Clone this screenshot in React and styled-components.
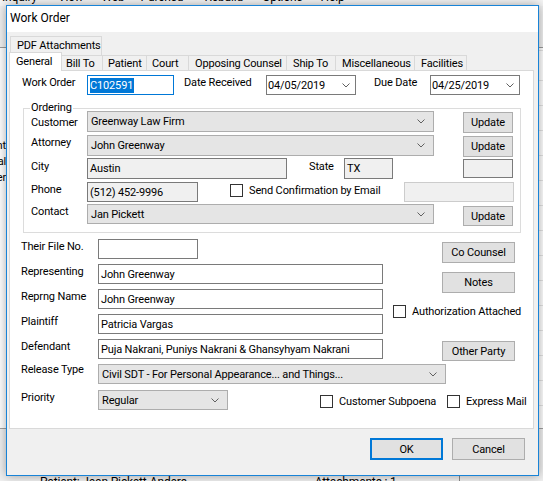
import React from "react";
import styled, { createGlobalStyle } from "styled-components";

const Global = createGlobalStyle`
  html, body { margin: 0; padding: 0; }
  body {
    font-family: Roboto, "Liberation Sans", Arial, sans-serif;
    font-size: 11px;
    letter-spacing: -0.15px;
    color: #000;
    background: #f0f0f0;
  }
  * { box-sizing: border-box; }
`;

/* ---------- background application ---------- */
const Desktop = styled.div`
  position: relative;
  width: 543px;
  height: 481px;
  overflow: hidden;
  background: #f0f0f0;
`;
const MenuBar = styled.div`
  height: 6px;
  overflow: hidden;
  background: #f5f5f5;
  display: flex;
  font-size: 12px;
`;
const MenuItem = styled.span`
  margin-top: -11px;
  margin-left: ${(p) => p.$ml}px;
  white-space: nowrap;
  line-height: 16px;
`;
const ToolArea = styled.div`
  height: 42px;
  border-bottom: 1px solid #9a9a9a;
  box-shadow: 0 2px 0 #c8c8c8;
`;
const AppBody = styled.div`
  display: flex;
  height: 380px;
`;
const SideList = styled.div`
  width: 6px;
  overflow: hidden;
  padding-top: 90px;
  display: flex;
  flex-direction: column;
  align-items: flex-end;
  background: #fff;
`;
const SideItem = styled.div`
  height: 16px;
  line-height: 16px;
  white-space: nowrap;
  flex-shrink: 0;
`;
const GridArea = styled.div`
  flex: 1;
  background: repeating-linear-gradient(
    to bottom,
    #fff 0px,
    #fff 24px,
    #e3e3e3 24px,
    #e3e3e3 25px
  );
  background-position: 0 8px;
`;
const BottomArea = styled.div`
  display: flex;
  height: 60px;
  border-top: 1px solid #a0a0a0;
  background: #f0f0f0;
`;
const BottomText = styled.span`
  margin-left: ${(p) => p.$ml}px;
  margin-top: 46px;
  white-space: nowrap;
  font-size: 12px;
`;
const BottomDivider = styled.div`
  margin-left: ${(p) => p.$ml}px;
  width: 1px;
  background: #8a8a8a;
`;

/* ---------- dialog window ---------- */
const Dialog = styled.div`
  position: absolute;
  left: 6px;
  top: 5px;
  width: 533px;
  height: 471px;
  border: 1px solid #1883d7;
  background: #f0f0f0;
  box-shadow: 0 0 10px rgba(0, 0, 0, 0.35);
  display: flex;
  flex-direction: column;
`;
const TitleBar = styled.div`
  height: 26px;
  background: #fff;
  padding-left: 3px;
  line-height: 24px;
  font-size: 12px;
  letter-spacing: 0;
`;
const TabArea = styled.div`
  padding: 4px 0 0 2px;
`;
const TabRow = styled.div`
  display: flex;
  align-items: flex-end;
  height: ${(p) => p.$h}px;
  padding-left: ${(p) => p.$pl || 0}px;
`;
const Tab = styled.div`
  position: relative;
  width: ${(p) => p.$w}px;
  height: ${(p) => (p.$active ? 19 : p.$h || 15)}px;
  margin-right: -1px;
  margin-bottom: ${(p) => (p.$active ? -1 : 0)}px;
  z-index: ${(p) => (p.$active ? 2 : 1)};
  border: 1px solid #d9d9d9;
  border-bottom: none;
  background: ${(p) => (p.$active ? "#fff" : "#f0f0f0")};
  padding-left: ${(p) => p.$pl}px;
  padding-top: ${(p) => (p.$active ? 1 : 0)}px;
  line-height: ${(p) => (p.$h ? p.$h - 2 : 15)}px;
  white-space: nowrap;
`;
const Panel = styled.div`
  margin-left: 2px;
  width: 525px;
  height: 359px;
  border: 1px solid #d9d9d9;
  background: #fff;
  padding: 4px 0 0 11px;
  display: flex;
  flex-direction: column;
`;
const Row = styled.div`
  display: flex;
  align-items: flex-start;
  height: ${(p) => p.$h}px;
  margin-left: ${(p) => p.$ml || 0}px;
  flex-shrink: 0;
`;
const Label = styled.div`
  width: ${(p) => (p.$w ? `${p.$w}px` : "auto")};
  margin-left: ${(p) => p.$ml || 0}px;
  margin-top: ${(p) => p.$dy || 0}px;
  line-height: 15px;
  white-space: nowrap;
  flex-shrink: 0;
`;
const TextBox = styled.div`
  width: ${(p) => p.$w}px;
  height: ${(p) => p.$h || 20}px;
  margin-left: ${(p) => (p.$auto ? "auto" : `${p.$ml || 0}px`)};
  margin-right: ${(p) => p.$mr || 0}px;
  margin-top: ${(p) => p.$dy || 0}px;
  border: 1px solid
    ${(p) => (p.$focus ? "#0078d7" : p.$disabled ? "#cccccc" : "#7a7a7a")};
  background: ${(p) => (p.$gray ? "#f0f0f0" : "#fff")};
  padding-left: 2px;
  display: flex;
  align-items: center;
  white-space: nowrap;
  overflow: hidden;
  flex-shrink: 0;
`;
const Selected = styled.span`
  background: #0078d7;
  color: #fff;
  line-height: 15px;
  padding: 0 1px 0 0;
`;
const Combo = styled.div`
  width: ${(p) => p.$w}px;
  height: ${(p) => p.$h || 20}px;
  margin-left: ${(p) => p.$ml || 0}px;
  border: 1px solid ${(p) => (p.$date ? "#7a7a7a" : "#adadad")};
  background: ${(p) => (p.$date ? "#fff" : "#e5e5e5")};
  padding: 0 ${(p) => (p.$date ? 5 : 8)}px 0 ${(p) => (p.$date ? 1 : 3)}px;
  display: flex;
  align-items: center;
  justify-content: space-between;
  white-space: nowrap;
  flex-shrink: 0;
`;
const Button = styled.button`
  width: ${(p) => p.$w}px;
  height: ${(p) => p.$h || 21}px;
  margin-left: ${(p) => (p.$auto ? "auto" : `${p.$ml || 0}px`)};
  margin-top: ${(p) => p.$dy || 0}px;
  padding: 0;
  font: inherit;
  letter-spacing: inherit;
  color: #000;
  background: #e1e1e1;
  border: ${(p) => (p.$default ? "2px solid #0078d7" : "1px solid #adadad")};
  flex-shrink: 0;
`;
const GroupBox = styled.div`
  margin: 13px 0 0 2px;
  width: 498px;
  border: 1px solid #dcdcdc;
  padding: 0 7px 8px 7px;
  display: flex;
  flex-direction: column;
`;
const Legend = styled.div`
  align-self: flex-start;
  margin: -9px 0 0 -1px;
  padding: 0 1px;
  height: 15px;
  line-height: 15px;
  background: #fff;
`;
const GroupRows = styled.div`
  margin-top: -4px;
  display: flex;
  flex-direction: column;
`;
const CheckItem = styled.label`
  display: flex;
  align-items: flex-start;
  width: ${(p) => (p.$w ? `${p.$w}px` : "auto")};
  margin-left: ${(p) => p.$ml || 0}px;
  margin-top: ${(p) => p.$dy || 0}px;
  line-height: 15px;
  white-space: nowrap;
  flex-shrink: 0;
`;
const Box = styled.span`
  width: 13px;
  height: 13px;
  margin: 1px 6px 0 0;
  border: 1px solid #333;
  background: #fff;
  flex-shrink: 0;
`;
const Lower = styled.div`
  display: flex;
  margin-top: 6px;
`;
const LeftCol = styled.div`
  display: flex;
  flex-direction: column;
`;
const RightCol = styled.div`
  margin-left: 10px;
  display: flex;
  flex-direction: column;
  align-items: flex-start;
`;
const Footer = styled.div`
  display: flex;
  justify-content: flex-end;
  gap: 9px;
  padding: 9px 13px 0 0;
`;

const Chevron = () => (
  <svg width="8" height="5" viewBox="0 0 8 5">
    <polyline points="0.5,0.5 4,4 7.5,0.5" fill="none" stroke="#606060" strokeWidth="1" />
  </svg>
);

const tabs = [
  ["General", 53, 6],
  ["Bill To", 42, 4],
  ["Patient", 45, 5],
  ["Court", 43, 5],
  ["Opposing Counsel", 99, 6],
  ["Ship To", 50, 6],
  ["Miscellaneous", 80, 6],
  ["Facilities", 53, 6],
];

const lowerRows = [
  ["Their File No.", "", 100],
  ["Representing", "John Greenway", 285],
  ["Reprng Name", "John Greenway", 285],
  ["Plaintiff", "Patricia Vargas", 285],
  ["Defendant", "Puja Nakrani, Puniys Nakrani & Ghansyhyam Nakrani", 285],
];

const menu = [
  ["Inquiry", 2],
  ["View", 21],
  ["Web", 18],
  ["Purchsd", 16],
  ["Rebuild", 21],
  ["Options", 19],
  ["Help", 18],
];

export default function App() {
  return (
    <Desktop>
      <Global />
      <MenuBar>
        {menu.map(([m, ml]) => (
          <MenuItem key={m} $ml={ml}>
            {m}
          </MenuItem>
        ))}
      </MenuBar>
      <ToolArea />
      <AppBody>
        <SideList>
          <SideItem>Client</SideItem>
          <SideItem>Special</SideItem>
          <SideItem>Order</SideItem>
        </SideList>
        <GridArea />
      </AppBody>
      <BottomArea>
        <BottomText $ml={40}>Patient: Jean Pickett-Anders</BottomText>
        <BottomText $ml={128}>Attachments : 1</BottomText>
        <BottomDivider $ml={62} />
      </BottomArea>

      <Dialog>
        <TitleBar>Work Order</TitleBar>
        <TabArea>
          <TabRow $h={19} $pl={1}>
            <Tab $w={92} $h={19} $pl={6}>
              PDF Attachments
            </Tab>
          </TabRow>
          <TabRow $h={15}>
            {tabs.map(([t, w, pl], i) => (
              <Tab key={t} $w={w} $pl={pl} $active={i === 0}>
                {t}
              </Tab>
            ))}
          </TabRow>
        </TabArea>

        <Panel>
          <Row $h={20} $ml={1}>
            <Label $w={65}>Work Order</Label>
            <TextBox $w={87} $focus>
              <Selected>C102591</Selected>
            </TextBox>
            <Label $w={82} $ml={10}>
              Date Received
            </Label>
            <Combo $w={90} $date>
              04/05/2019
              <Chevron />
            </Combo>
            <Label $w={56} $ml={18}>
              Due Date
            </Label>
            <Combo $w={90} $date>
              04/25/2019
              <Chevron />
            </Combo>
          </Row>

          <GroupBox>
            <Legend>Ordering</Legend>
            <GroupRows>
              <Row $h={24}>
                <Label $w={56} $dy={4}>
                  Customer
                </Label>
                <Combo $w={347} $h={21}>
                  Greenway Law Firm
                  <Chevron />
                </Combo>
                <Button $w={50} $auto $dy={1}>
                  Update
                </Button>
              </Row>
              <Row $h={23}>
                <Label $w={56}>Attorney</Label>
                <Combo $w={347} $h={21}>
                  John Greenway
                  <Chevron />
                </Combo>
                <Button $w={50} $auto $dy={1}>
                  Update
                </Button>
              </Row>
              <Row $h={24}>
                <Label $w={56} $dy={1}>
                  City
                </Label>
                <TextBox $w={200} $h={21} $gray>
                  Austin
                </TextBox>
                <Label $w={35} $ml={22} $dy={1}>
                  State
                </Label>
                <TextBox $w={49} $h={21} $gray>
                  TX
                </TextBox>
                <TextBox $w={50} $h={19} $gray $auto $dy={1} />
              </Row>
              <Row $h={22}>
                <Label $w={56}>Phone</Label>
                <TextBox $w={111} $gray>
                  (512) 452-9996
                </TextBox>
                <CheckItem $ml={32} $dy={1}>
                  <Box />
                  Send Confirmation by Email
                </CheckItem>
                <TextBox $w={110} $gray $disabled $auto $mr={-1} />
              </Row>
              <Row $h={20}>
                <Label $w={56}>Contact</Label>
                <Combo $w={347}>
                  Jan Pickett
                  <Chevron />
                </Combo>
                <Button $w={50} $h={20} $auto $dy={2}>
                  Update
                </Button>
              </Row>
            </GroupRows>
          </GroupBox>

          <Lower>
            <LeftCol>
              {lowerRows.map(([l, v, w]) => (
                <Row key={l} $h={25}>
                  <Label $w={77}>{l}</Label>
                  <TextBox $w={w}>{v}</TextBox>
                </Row>
              ))}
            </LeftCol>
            <RightCol>
              <Button $w={73} $ml={49} $dy={3}>
                Co Counsel
              </Button>
              <Button $w={73} $ml={49} $dy={9}>
                Notes
              </Button>
              <CheckItem $dy={11}>
                <Box />
                Authorization Attached
              </CheckItem>
              <Button $w={73} $h={20} $ml={49} $dy={22}>
                Other Party
              </Button>
            </RightCol>
          </Lower>

          <Row $h={26}>
            <Label $w={77} $dy={-2}>
              Release Type
            </Label>
            <Combo $w={348}>
              Civil SDT - For Personal Appearance... and Things...
              <Chevron />
            </Combo>
          </Row>
          <Row $h={20}>
            <Label $w={77}>Priority</Label>
            <Combo $w={130}>
              Regular
              <Chevron />
            </Combo>
            <CheckItem $w={127} $ml={92} $dy={4}>
              <Box />
              Customer Subpoena
            </CheckItem>
            <CheckItem $dy={4}>
              <Box />
              Express Mail
            </CheckItem>
          </Row>
        </Panel>

        <Footer>
          <Button $w={73} $h={22} $default>
            OK
          </Button>
          <Button $w={73} $h={22}>
            Cancel
          </Button>
        </Footer>
      </Dialog>
    </Desktop>
  );
}
